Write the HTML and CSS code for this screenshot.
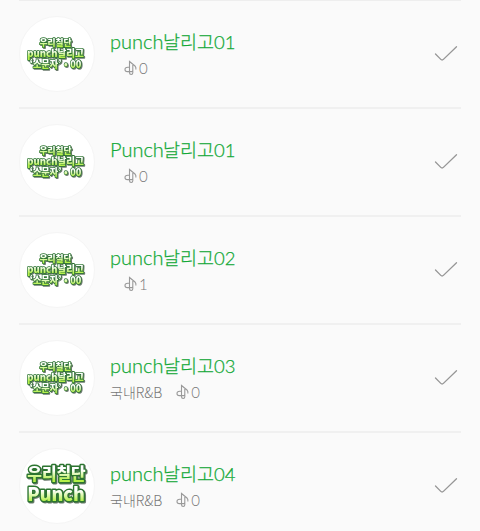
FILE: index.html
```
<!DOCTYPE html>
<html lang="ko">
<head>
    <meta charset="UTF-8">
    <meta name="viewport" content="width=device-width, initial-scale=1.0">
    <title>punch날리고</title>
    <link rel="stylesheet" href="styles.css">
</head>
<body>
    <!-- shared shapes -->
    <svg class="defs" width="0" height="0">
        <defs>
            <linearGradient id="lime" x1="0" y1="0" x2="0" y2="1">
                <stop offset="0.4" stop-color="#fff"/>
                <stop offset="0.8" stop-color="#b4f04a"/>
            </linearGradient>
            <symbol id="note" viewBox="0 0 14 16">
                <path d="M5.500 11.500V1.500l5.500 4.500c1 .9 1.100 2 .9 3.500M5.500 7.200H3.800C2 7.200 1 8.200 1 9.400s1 2.200 2.300 2.200h4.200c.8 0 1.300-.6 1.300-1.400V4.300M5.500 11.500v1.300c0 1 .7 1.700 1.700 1.700s1.600-.7 1.600-1.700v-2.600"/>
            </symbol>
            <symbol id="check" viewBox="0 0 24 18">
                <path d="M1.500 9l5.300 5.400c.8.800 1.800.8 2.600 0L22.500 1.800"/>
            </symbol>
            <symbol id="cover" viewBox="0 0 76 76">
                <text class="cover-text" x="20" y="29.500" font-size="9.500" textLength="33" lengthAdjust="spacingAndGlyphs">우리칠단</text>
                <text class="cover-text" x="7.500" y="41" font-size="10.500" textLength="58" lengthAdjust="spacingAndGlyphs">punch날리고</text>
                <text class="cover-text" x="10" y="52.500" font-size="10.500" textLength="53" lengthAdjust="spacingAndGlyphs">‘소문자’ • 00</text>
            </symbol>
        </defs>
    </svg>

    <ul class="list">
        <li class="item">
            <svg class="avatar" viewBox="0 0 76 76"><use href="#cover"/></svg>
            <div class="info">
                <p class="name"><span class="latin">punch</span>날리고<span class="num">01</span></p>
                <p class="meta"><span class="genre"></span><svg class="note"><use href="#note"/></svg><span class="count">0</span></p>
            </div>
            <svg class="check"><use href="#check"/></svg>
        </li>
        <li class="item">
            <svg class="avatar" viewBox="0 0 76 76"><use href="#cover"/></svg>
            <div class="info">
                <p class="name"><span class="latin">Punch</span>날리고<span class="num">01</span></p>
                <p class="meta"><span class="genre"></span><svg class="note"><use href="#note"/></svg><span class="count">0</span></p>
            </div>
            <svg class="check"><use href="#check"/></svg>
        </li>
        <li class="item">
            <svg class="avatar" viewBox="0 0 76 76"><use href="#cover"/></svg>
            <div class="info">
                <p class="name"><span class="latin">punch</span>날리고<span class="num">02</span></p>
                <p class="meta"><span class="genre"></span><svg class="note"><use href="#note"/></svg><span class="count">1</span></p>
            </div>
            <svg class="check"><use href="#check"/></svg>
        </li>
        <li class="item">
            <svg class="avatar" viewBox="0 0 76 76"><use href="#cover"/></svg>
            <div class="info">
                <p class="name"><span class="latin">punch</span>날리고<span class="num">03</span></p>
                <p class="meta"><span class="genre">국내R&amp;B</span><svg class="note"><use href="#note"/></svg><span class="count">0</span></p>
            </div>
            <svg class="check"><use href="#check"/></svg>
        </li>
        <li class="item">
            <svg class="avatar" viewBox="0 0 76 76">
                <text class="cover-text big" x="7.500" y="31.500" font-size="17" textLength="60" lengthAdjust="spacingAndGlyphs">우리칠단</text>
                <text class="cover-text big" x="7.500" y="53.500" font-size="19" textLength="59" lengthAdjust="spacingAndGlyphs">Punch</text>
            </svg>
            <div class="info">
                <p class="name"><span class="latin">punch</span>날리고<span class="num">04</span></p>
                <p class="meta"><span class="genre">국내R&amp;B</span><svg class="note"><use href="#note"/></svg><span class="count">0</span></p>
            </div>
            <svg class="check"><use href="#check"/></svg>
        </li>
    </ul>
</body>
</html>
```
FILE: styles.css
```
body {
    margin: 0;
    height: 531px;
    overflow: hidden;
    background-color: #fafafa;
    font-family: "Noto Sans CJK KR", sans-serif;
    font-weight: 300;
}

.defs {
    position: absolute;
}

.list {
    list-style: none;
    margin: 0 19px;
    padding: 0;
    border-top: 1px solid #eee;
}

.item {
    display: flex;
    align-items: flex-start;
    box-sizing: border-box;
    height: 108px;
    padding-top: 15px;
    border-bottom: 2px solid #f0f0f0;
}

.avatar {
    box-sizing: border-box;
    flex: none;
    width: 76px;
    height: 76px;
    border: 1px solid #f5f5f5;
    border-radius: 50%;
    background: #fff;
}

.cover-text {
    font-family: "Noto Sans CJK KR", sans-serif;
    font-weight: 900;
    fill: url(#lime);
    stroke: #2c7530;
    stroke-width: 1.600px;
    stroke-linejoin: round;
    paint-order: stroke;
    filter: drop-shadow(1px 1px 0 #68776a);
}

.cover-text.big {
    stroke-width: 3px;
}

.info {
    flex: 1;
    padding: 11px 0 0 15px;
}

.name {
    display: flex;
    align-items: baseline;
    margin: 0;
    height: 28px;
    line-height: 28px;
    font-size: 18.500px;
    color: #12a836;
    -webkit-text-stroke: 0.250px #12a836;
}

.latin {
    width: 53px;
    font-family: Lato, sans-serif;
    font-size: 20px;
}

.num {
    font-family: Lato, sans-serif;
    font-size: 18.500px;
}

.meta {
    display: flex;
    align-items: center;
    margin: 0;
    height: 26px;
    font-size: 14px;
    line-height: 26px;
    color: #777;
}

.genre {
    margin-right: 14px;
}

.note {
    width: 14px;
    height: 16px;
    margin-right: 1px;
    fill: none;
    stroke: #999;
    stroke-width: 1.100px;
}

.count {
    font-family: Lato, sans-serif;
    font-size: 15px;
}

.check {
    flex: none;
    width: 24px;
    height: 18px;
    margin: 29px 3px 0 0;
    fill: none;
    stroke: #969696;
    stroke-width: 1.300px;
    stroke-linecap: round;
}
```
